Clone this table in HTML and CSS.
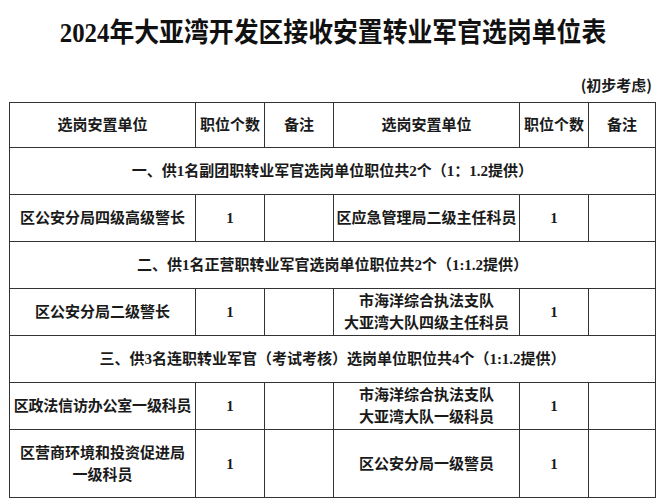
FILE: index.html
```html
<!DOCTYPE html>
<html lang="zh-CN">
<head>
<meta charset="utf-8">
<title>2024年大亚湾开发区接收安置转业军官选岗单位表</title>
<link rel="stylesheet" href="styles.css">
</head>
<body>
<div class="page">
  <h1 class="title"><span class="title-inner">2024年大亚湾开发区接收安置转业军官选岗单位表</span></h1>
  <div class="note">(初步考虑)</div>
  <table class="grid">
    <colgroup>
      <col class="c-unit"><col class="c-num"><col class="c-rem">
      <col class="c-unit"><col class="c-num"><col class="c-rem2">
    </colgroup>
    <tr class="r-head">
      <th>选岗安置单位</th><th>职位个数</th><th>备注</th>
      <th>选岗安置单位</th><th>职位个数</th><th>备注</th>
    </tr>
    <tr class="r-sec">
      <td colspan="6">一、供1名副团职转业军官选岗单位职位共2个（1：1.2提供）</td>
    </tr>
    <tr class="r-row">
      <td>区公安分局四级高级警长</td><td class="n">1</td><td></td>
      <td>区应急管理局二级主任科员</td><td class="n">1</td><td></td>
    </tr>
    <tr class="r-sec">
      <td colspan="6">二、供1名正营职转业军官选岗单位职位共2个（1:1.2提供）</td>
    </tr>
    <tr class="r-row">
      <td>区公安分局二级警长</td><td class="n">1</td><td></td>
      <td>市海洋综合执法支队<br>大亚湾大队四级主任科员</td><td class="n">1</td><td></td>
    </tr>
    <tr class="r-sec">
      <td colspan="6">三、供3名连职转业军官（考试考核）选岗单位职位共4个（1:1.2提供）</td>
    </tr>
    <tr class="r-row">
      <td class="tight">区政法信访办公室一级科员</td><td class="n">1</td><td></td>
      <td>市海洋综合执法支队<br>大亚湾大队一级科员</td><td class="n">1</td><td></td>
    </tr>
    <tr class="r-tall">
      <td>区营商环境和投资促进局<br>一级科员</td><td class="n">1</td><td></td>
      <td>区公安分局一级警员</td><td class="n">1</td><td></td>
    </tr>
  </table>
  <div class="edge"></div>
</div>
</body>
</html>
```

FILE: styles.css
```css
html, body {
  margin: 0;
  padding: 0;
  background: #ffffff;
}
body {
  font-family: "Liberation Serif", "Noto Sans CJK SC", serif;
  color: #1a1a1a;
}
.page {
  width: 666px;
  height: 500px;
  overflow: hidden;
  display: flex;
  flex-direction: column;
}
.title {
  margin: 0;
  padding-top: 17px;
  height: 32px;
  line-height: 32px;
  font-size: 27px;
  font-weight: 700;
  text-align: center;
  color: #111;
  white-space: nowrap;
}
.title-inner {
  display: inline-block;
  transform: scaleX(0.92);
  transform-origin: 50% 50%;
}
.note {
  margin-top: 27px;
  height: 18px;
  line-height: 18px;
  padding-right: 14px;
  text-align: right;
  font-family: "Noto Sans CJK SC", sans-serif;
  font-size: 15px;
  font-weight: 700;
}
.grid {
  margin: 8px 0 0 9px;
  width: 646px;
  table-layout: fixed;
  border-collapse: collapse;
  font-size: 15px;
  font-weight: 700;
}
.c-unit { width: 186px; }
.c-num { width: 69px; }
.c-rem { width: 69px; }
.c-rem2 { width: 67px; }
.grid th, .grid td {
  border: 1.5px solid #333;
  padding: 0;
  text-align: center;
  vertical-align: middle;
  line-height: 22px;
  font-weight: 700;
}
.grid .tight {
  letter-spacing: -0.2px;
  white-space: nowrap;
}
.r-head { height: 45px; }
.r-sec { height: 47px; }
.r-row { height: 47px; }
.r-tall { height: 68px; }
.grid .n {
  font-size: 15px;
}
.edge {
  margin-top: 2px;
  flex: 1;
  background: #e8e8e8;
}
```
